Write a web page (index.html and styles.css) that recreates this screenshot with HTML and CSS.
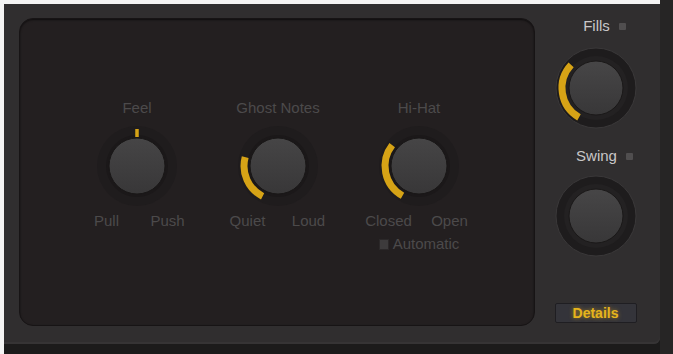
FILE: index.html
```html
<!DOCTYPE html>
<html lang="en">
<head>
    <meta charset="UTF-8">
    <meta name="viewport" content="width=device-width, initial-scale=1.0">
    <title>Drummer</title>
    <link rel="stylesheet" href="styles.css">
</head>
<body>
<div class="screen">
    <div class="frame">
        <div class="panel">
            <div class="editor">
                <div class="unit">
                    <p class="knob-title">Feel</p>
                    <svg class="knob" width="84" height="84" viewBox="0 0 84 84">
                        <defs>
                            <linearGradient id="capFeel" x1="0" y1="0" x2="0" y2="1">
                                <stop offset="0" stop-color="#464546"/>
                                <stop offset="1" stop-color="#383738"/>
                            </linearGradient>
                        </defs>
                        <circle cx="42" cy="42" r="40" fill="#1f1c1d"/>
                        <circle cx="42" cy="42" r="31" fill="#1b1819"/>
                        <line x1="42" y1="5" x2="42" y2="13" stroke="#d6a316" stroke-width="3.5"/>
                        <circle cx="42" cy="42" r="28" fill="url(#capFeel)" stroke="#191717" stroke-width="1"/>
                    </svg>
                    <div class="range">
                        <span>Pull</span>
                        <span>Push</span>
                    </div>
                </div>

                <div class="unit">
                    <p class="knob-title">Ghost Notes</p>
                    <svg class="knob" width="84" height="84" viewBox="0 0 84 84">
                        <defs>
                            <linearGradient id="capGhost" x1="0" y1="0" x2="0" y2="1">
                                <stop offset="0" stop-color="#464546"/>
                                <stop offset="1" stop-color="#383738"/>
                            </linearGradient>
                        </defs>
                        <circle cx="42" cy="42" r="40" fill="#1f1c1d"/>
                        <circle cx="42" cy="42" r="31" fill="#1b1819"/>
                        <path d="M 26.6 72.3 A 34 34 0 0 1 9.2 33.2" fill="none" stroke="#d6a316" stroke-width="7"/>
                        <circle cx="42" cy="42" r="28" fill="url(#capGhost)" stroke="#191717" stroke-width="1"/>
                    </svg>
                    <div class="range">
                        <span>Quiet</span>
                        <span>Loud</span>
                    </div>
                </div>

                <div class="unit">
                    <p class="knob-title">Hi-Hat</p>
                    <svg class="knob" width="84" height="84" viewBox="0 0 84 84">
                        <defs>
                            <linearGradient id="capHat" x1="0" y1="0" x2="0" y2="1">
                                <stop offset="0" stop-color="#464546"/>
                                <stop offset="1" stop-color="#383738"/>
                            </linearGradient>
                        </defs>
                        <circle cx="42" cy="42" r="40" fill="#1f1c1d"/>
                        <circle cx="42" cy="42" r="31" fill="#1b1819"/>
                        <path d="M 25.5 71.7 A 34 34 0 0 1 15.2 21.1" fill="none" stroke="#d6a316" stroke-width="7"/>
                        <circle cx="42" cy="42" r="28" fill="url(#capHat)" stroke="#191717" stroke-width="1"/>
                    </svg>
                    <div class="range">
                        <span>Closed</span>
                        <span>Open</span>
                    </div>
                    <label class="auto">
                        <span class="check"></span>
                        Automatic
                    </label>
                </div>
            </div>

            <div class="side">
                <div class="side-title">
                    <span>Fills</span>
                    <span class="led"></span>
                </div>
                <svg class="side-knob" width="84" height="84" viewBox="0 0 84 84">
                    <defs>
                        <linearGradient id="capFills" x1="0" y1="0" x2="0" y2="1">
                            <stop offset="0" stop-color="#474647"/>
                            <stop offset="1" stop-color="#383738"/>
                        </linearGradient>
                    </defs>
                    <circle cx="42" cy="42" r="40" fill="#1e1c1d" stroke="#3a3839" stroke-width="1"/>
                    <circle cx="42" cy="42" r="32" fill="#232122"/>
                    <path d="M 25 71.4 A 34 34 0 0 1 17.1 18.8" fill="none" stroke="#d6a316" stroke-width="7"/>
                    <circle cx="42" cy="42" r="27" fill="url(#capFills)" stroke="#1a1818" stroke-width="1"/>
                </svg>

                <div class="side-title swing">
                    <span>Swing</span>
                    <span class="led"></span>
                </div>
                <svg class="side-knob" width="84" height="84" viewBox="0 0 84 84">
                    <defs>
                        <linearGradient id="capSwing" x1="0" y1="0" x2="0" y2="1">
                            <stop offset="0" stop-color="#474647"/>
                            <stop offset="1" stop-color="#383738"/>
                        </linearGradient>
                    </defs>
                    <circle cx="42" cy="42" r="40" fill="#1e1c1d" stroke="#3a3839" stroke-width="1"/>
                    <circle cx="42" cy="42" r="32" fill="#232122"/>
                    <circle cx="42" cy="42" r="27" fill="url(#capSwing)" stroke="#1a1818" stroke-width="1"/>
                </svg>

                <button class="details">Details</button>
            </div>
        </div>
    </div>
</div>
</body>
</html>
```

FILE: styles.css
```css
body {
    margin: 0;
    background-color: #1d1c1c;
    font-family: "Liberation Sans", Arial, sans-serif;
}

.screen {
    width: 673px;
    height: 354px;
    display: flex;
    background-color: #262525;
}

.frame {
    width: 656px;
    height: 350px;
    border-top: 4px solid #f4f4f4;
    border-left: 4px solid #f4f4f4;
    background-color: #1c1b1b;
}

.panel {
    height: 308px;
    padding: 14px 0 18px 15px;
    display: flex;
    background-color: #302e2f;
    border-radius: 0 0 6px 0;
    box-shadow: inset 0 -2px 0 #363435;
}

.editor {
    width: 516px;
    height: 308px;
    display: flex;
    gap: 21px;
    padding-left: 57px;
    box-sizing: border-box;
    padding-top: 81px;
    background-color: #231f20;
    border: 1px solid #171415;
    border-radius: 14px;
    box-shadow: inset 0 1px 2px rgba(0, 0, 0, 0.6);
}

.unit {
    width: 120px;
    display: flex;
    flex-direction: column;
    align-items: center;
    color: #4c4a4b;
    font-size: 15px;
}

.knob-title {
    margin: 0;
    line-height: 16px;
}

.knob {
    display: block;
    margin-top: 8px;
}

.range {
    width: 122px;
    display: grid;
    grid-template-columns: 1fr 1fr;
    text-align: center;
    line-height: 16px;
    margin-top: 5px;
}

.auto {
    display: flex;
    align-items: center;
    gap: 4px;
    line-height: 16px;
    margin-top: 7px;
}

.check {
    width: 8px;
    height: 9px;
    background-color: #3d3b3c;
    border: 1px solid #2b2829;
}

.side {
    width: 121px;
    padding-right: 4px;
    display: flex;
    flex-direction: column;
    align-items: center;
}

.side-title {
    display: flex;
    align-items: center;
    gap: 9px;
    padding-left: 18px;
    color: #c9c7c8;
    font-size: 15px;
    line-height: 16px;
}

.led {
    width: 7px;
    height: 7px;
    background-color: #504e4f;
    border-radius: 1px;
}

.side-knob {
    display: block;
    margin-top: 12px;
}

.swing {
    margin-top: 18px;
}

.swing + .side-knob {
    margin-top: 10px;
}

.details {
    margin-top: 45px;
    width: 82px;
    height: 20px;
    padding: 0;
    background-color: #34343a;
    border: 1px solid #1f1e22;
    border-radius: 2px;
    color: #e6b41c;
    font-family: "Liberation Sans", Arial, sans-serif;
    font-size: 14px;
    font-weight: bold;
    text-shadow: 0 0 4px rgba(230, 180, 28, 0.6);
}
```
